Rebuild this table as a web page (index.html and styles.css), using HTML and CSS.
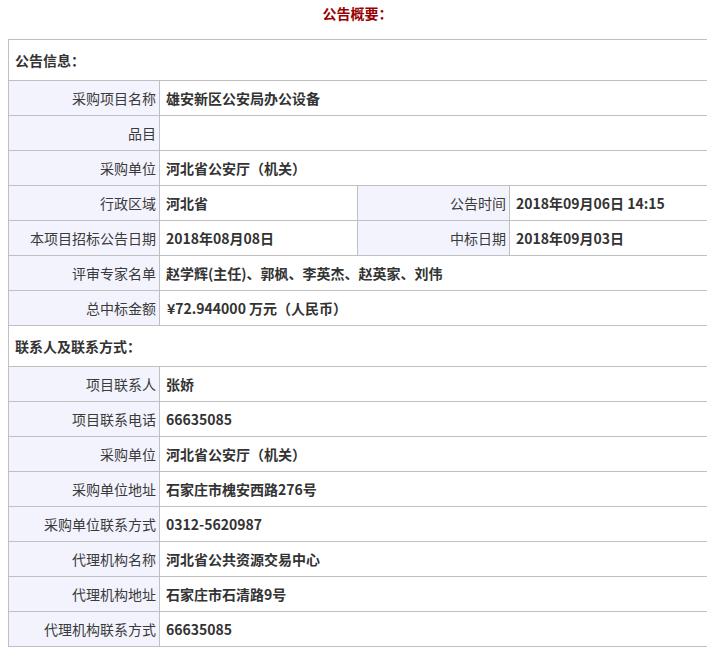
FILE: index.html
```html
<!DOCTYPE html>
<html lang="zh-CN">
<head>
<meta charset="utf-8">
<title>公告概要</title>
<link rel="stylesheet" href="styles.css">
</head>
<body>
<div class="title">公告概要：</div>
<table class="info">
  <colgroup>
    <col class="c-label">
    <col class="c-value">
    <col class="c-label2">
    <col class="c-value2">
  </colgroup>
  <tr class="section"><td colspan="4">公告信息：</td></tr>
  <tr><td class="label">采购项目名称</td><td class="value" colspan="3">雄安新区公安局办公设备</td></tr>
  <tr><td class="label">品目</td><td class="value" colspan="3"></td></tr>
  <tr><td class="label">采购单位</td><td class="value" colspan="3">河北省公安厅（机关）</td></tr>
  <tr><td class="label">行政区域</td><td class="value">河北省</td><td class="label">公告时间</td><td class="value">2018年09月06日 14:15</td></tr>
  <tr><td class="label">本项目招标公告日期</td><td class="value">2018年08月08日</td><td class="label">中标日期</td><td class="value">2018年09月03日</td></tr>
  <tr><td class="label">评审专家名单</td><td class="value" colspan="3">赵学辉(主任)、郭枫、李英杰、赵英家、刘伟</td></tr>
  <tr><td class="label">总中标金额</td><td class="value" colspan="3"><span class="money">¥72.944000 万元（人民币）</span></td></tr>
  <tr class="section"><td colspan="4">联系人及联系方式：</td></tr>
  <tr><td class="label">项目联系人</td><td class="value" colspan="3">张娇</td></tr>
  <tr><td class="label">项目联系电话</td><td class="value" colspan="3">66635085</td></tr>
  <tr><td class="label">采购单位</td><td class="value" colspan="3">河北省公安厅（机关）</td></tr>
  <tr><td class="label">采购单位地址</td><td class="value" colspan="3">石家庄市槐安西路276号</td></tr>
  <tr><td class="label">采购单位联系方式</td><td class="value" colspan="3">0312-5620987</td></tr>
  <tr><td class="label">代理机构名称</td><td class="value" colspan="3">河北省公共资源交易中心</td></tr>
  <tr><td class="label">代理机构地址</td><td class="value" colspan="3">石家庄市石清路9号</td></tr>
  <tr><td class="label">代理机构联系方式</td><td class="value" colspan="3">66635085</td></tr>
</table>
</body>
</html>
```
FILE: styles.css
```css
html, body {
  background: #ffffff;
}
body {
  margin: 0 8px 8px 8px;
  font-family: "Noto Sans CJK SC", "Noto Sans", sans-serif;
  font-size: 14px;
  color: #333333;
}
.title {
  height: 26px;
  line-height: 26px;
  margin-bottom: 13px;
  text-align: center;
  font-weight: bold;
  color: #990000;
}
.info {
  width: 100%;
  border-collapse: collapse;
  table-layout: fixed;
  border: 1px solid #c0c0c0;
}
.c-label { width: 151px; }
.c-value { width: 198px; }
.c-label2 { width: 152px; }
.c-value2 { width: 199px; }
.info td {
  border: 1px solid #c0c0c0;
  height: 34px;
  line-height: 20px;
  padding: 0;
  white-space: nowrap;
  overflow: hidden;
}
.info .section td {
  height: 40px;
  padding-left: 6px;
  font-weight: bold;
  background: #ffffff;
}
.info td.label {
  background: #f3f3fd;
  text-align: right;
  padding-right: 3px;
  color: #3a3a3a;
}
.info td.value {
  padding-left: 6px;
  font-weight: bold;
  color: #333333;
}
.money {
  padding-left: 1px;
}
```
